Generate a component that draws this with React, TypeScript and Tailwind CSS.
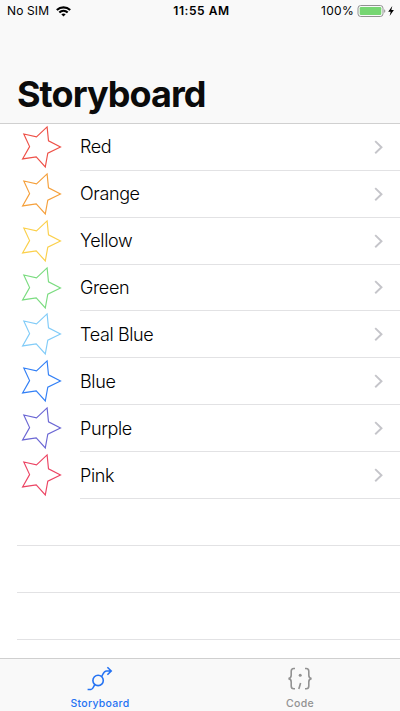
import React from "react";

const rows = [
  { label: "Red", color: "#ee5148", height: "h-[47px]", nudge: "pt-0" },
  { label: "Orange", color: "#f5a03c", height: "h-[47px]", nudge: "pt-0" },
  { label: "Yellow", color: "#fbd04c", height: "h-[47px]", nudge: "pt-0" },
  { label: "Green", color: "#7bdc80", height: "h-[46px]", nudge: "pt-px" },
  { label: "Teal Blue", color: "#82ccf8", height: "h-[47px]", nudge: "pt-px" },
  { label: "Blue", color: "#3380f6", height: "h-[47px]", nudge: "pt-px" },
  { label: "Purple", color: "#6b67d4", height: "h-[47px]", nudge: "pt-px" },
  { label: "Pink", color: "#ec4564", height: "h-[47px]", nudge: "pt-px" },
];

function Star({ color }: { color: string }) {
  return (
    <svg className="ml-5 h-[46px] w-11 shrink-0" viewBox="0 0 44 46" fill="none" stroke={color} strokeWidth="1.15">
      <path d="M27.1 2.9 28.5 16.8 40.5 23 27.8 29.2 25.3 42.9 16.2 32.9 2.6 34.9 9.6 22.6 3.8 10 16.5 12.9Z" />
    </svg>
  );
}

function StatusBar() {
  return (
    <div className="grid h-[22px] grid-cols-3 items-center text-[12px] leading-[22px] text-black">
      <div className="flex items-center pl-[7px]">
        <span className="tracking-[0.12px]">No SIM</span>
        <svg className="ml-[7px] h-[11px] w-[15px]" viewBox="0 0 15 11" fill="none" stroke="#000" strokeWidth="2.1">
          <path d="M.8 4.1C4.6.4 10.4.4 14.2 4.1M3.3 6.6c2.4-2.3 6-2.3 8.4 0" />
          <path d="M7.5 10.4 5.3 8.3c1.3-1 3.1-1 4.4 0Z" fill="#000" stroke="none" />
        </svg>
      </div>
      <div className="pl-[3px] text-center font-semibold tracking-[0.55px]">11:55 AM</div>
      <div className="flex items-center justify-end pr-[5px]">
        <span className="tracking-[0.3px]">100%</span>
        <svg className="ml-[3px] h-3 w-[38px]" viewBox="0 0 38 12">
          <rect x="1" y=".5" width="25" height="11" rx="2.7" fill="none" stroke="#919191" />
          <rect x="2.7" y="2.1" width="21.6" height="7.8" rx="1.2" fill="#76d672" />
          <path d="M27.2 4.2c1.5.5 1.5 3.1 0 3.6Z" fill="#919191" />
          <path d="M35.3 1 31.2 6.7h2.5L32.6 11l4.3-5.9h-2.6Z" fill="#000" />
        </svg>
      </div>
    </div>
  );
}

export default function App() {
  return (
    <div className="flex h-[711px] w-[400px] flex-col overflow-hidden bg-white font-['Inter','Liberation_Sans',sans-serif]">
      <header className="flex h-[124px] shrink-0 flex-col justify-between border-b border-[#d0d0d0] bg-[#f9f9f9]">
        <StatusBar />
        <h1 className="mb-[6px] pl-[17px] text-[36px] leading-[46px] font-bold tracking-[-0.95px] text-[#0b0b0b]">Storyboard</h1>
      </header>
      <main className="min-h-0 flex-1 overflow-hidden">
        {rows.map((row) => (
          <div key={row.label} className={`flex ${row.height}`}>
            <Star color={row.color} />
            <div className="ml-4 flex flex-1 items-center justify-between border-b border-[#e2e2e4] pr-4">
              <span className={`${row.nudge} text-[18px] leading-6 font-[350] tracking-[-0.37px] text-black`}>{row.label}</span>
              <svg className="h-[15px] w-[10px]" viewBox="0 0 10 15" fill="none" stroke="#c5c5ca" strokeWidth="1.9">
                <path d="M1.2 1.1 7.5 7.2 1.2 13.3" />
              </svg>
            </div>
          </div>
        ))}
        <div className="ml-[17px] h-[47px] border-b border-[#e2e2e4]" />
        <div className="ml-[17px] h-[47px] border-b border-[#e2e2e4]" />
        <div className="ml-[17px] h-[47px] border-b border-[#e2e2e4]" />
      </main>
      <nav className="grid h-[53px] shrink-0 grid-cols-2 border-t border-[#cfcfcf] bg-[#f9f9f9] text-[10.5px] leading-[14px] font-medium">
        <div className="flex flex-col items-center pt-[7px] text-[#2573f3]">
          <svg className="h-[26px] w-[28px]" viewBox="0 0 28 26" fill="none" stroke="currentColor" strokeWidth="1.6">
            <circle cx="12.1" cy="14.4" r="5.2" />
            <path d="M1.6 23.5H5c2.1 0 2.3-2.7 3.7-4.8M15.6 10.5c1.5-2.1 2-5.5 4.9-5.5h4.6M21.4 1.3l3.8 3.7-3.8 3.7" />
          </svg>
          <span className="mt-[5px] tracking-[0.3px]">Storyboard</span>
        </div>
        <div className="flex flex-col items-center pt-[7px] text-[#929292]">
          <svg className="h-[26px] w-[28px]" viewBox="0 0 28 26" fill="none" stroke="currentColor" strokeWidth="1.6">
            <path d="M9 2.5H7.8C6 2.5 5.2 3.5 5.2 5.2v4.1c0 1.9-.8 2.9-2.7 3.3 1.9.4 2.7 1.4 2.7 3.3v4.1c0 1.7.8 2.7 2.6 2.7H9M19 2.5h1.2c1.8 0 2.6 1 2.6 2.7v4.1c0 1.9.8 2.9 2.7 3.3-1.9.4-2.7 1.4-2.7 3.3v4.1c0 1.7-.8 2.7-2.6 2.7H19" />
            <circle cx="14.2" cy="9.2" r="1.5" fill="currentColor" stroke="none" />
            <path d="m14.6 17-1.8 6" />
          </svg>
          <span className="mt-[5px] tracking-[0.3px]">Code</span>
        </div>
      </nav>
    </div>
  );
}
